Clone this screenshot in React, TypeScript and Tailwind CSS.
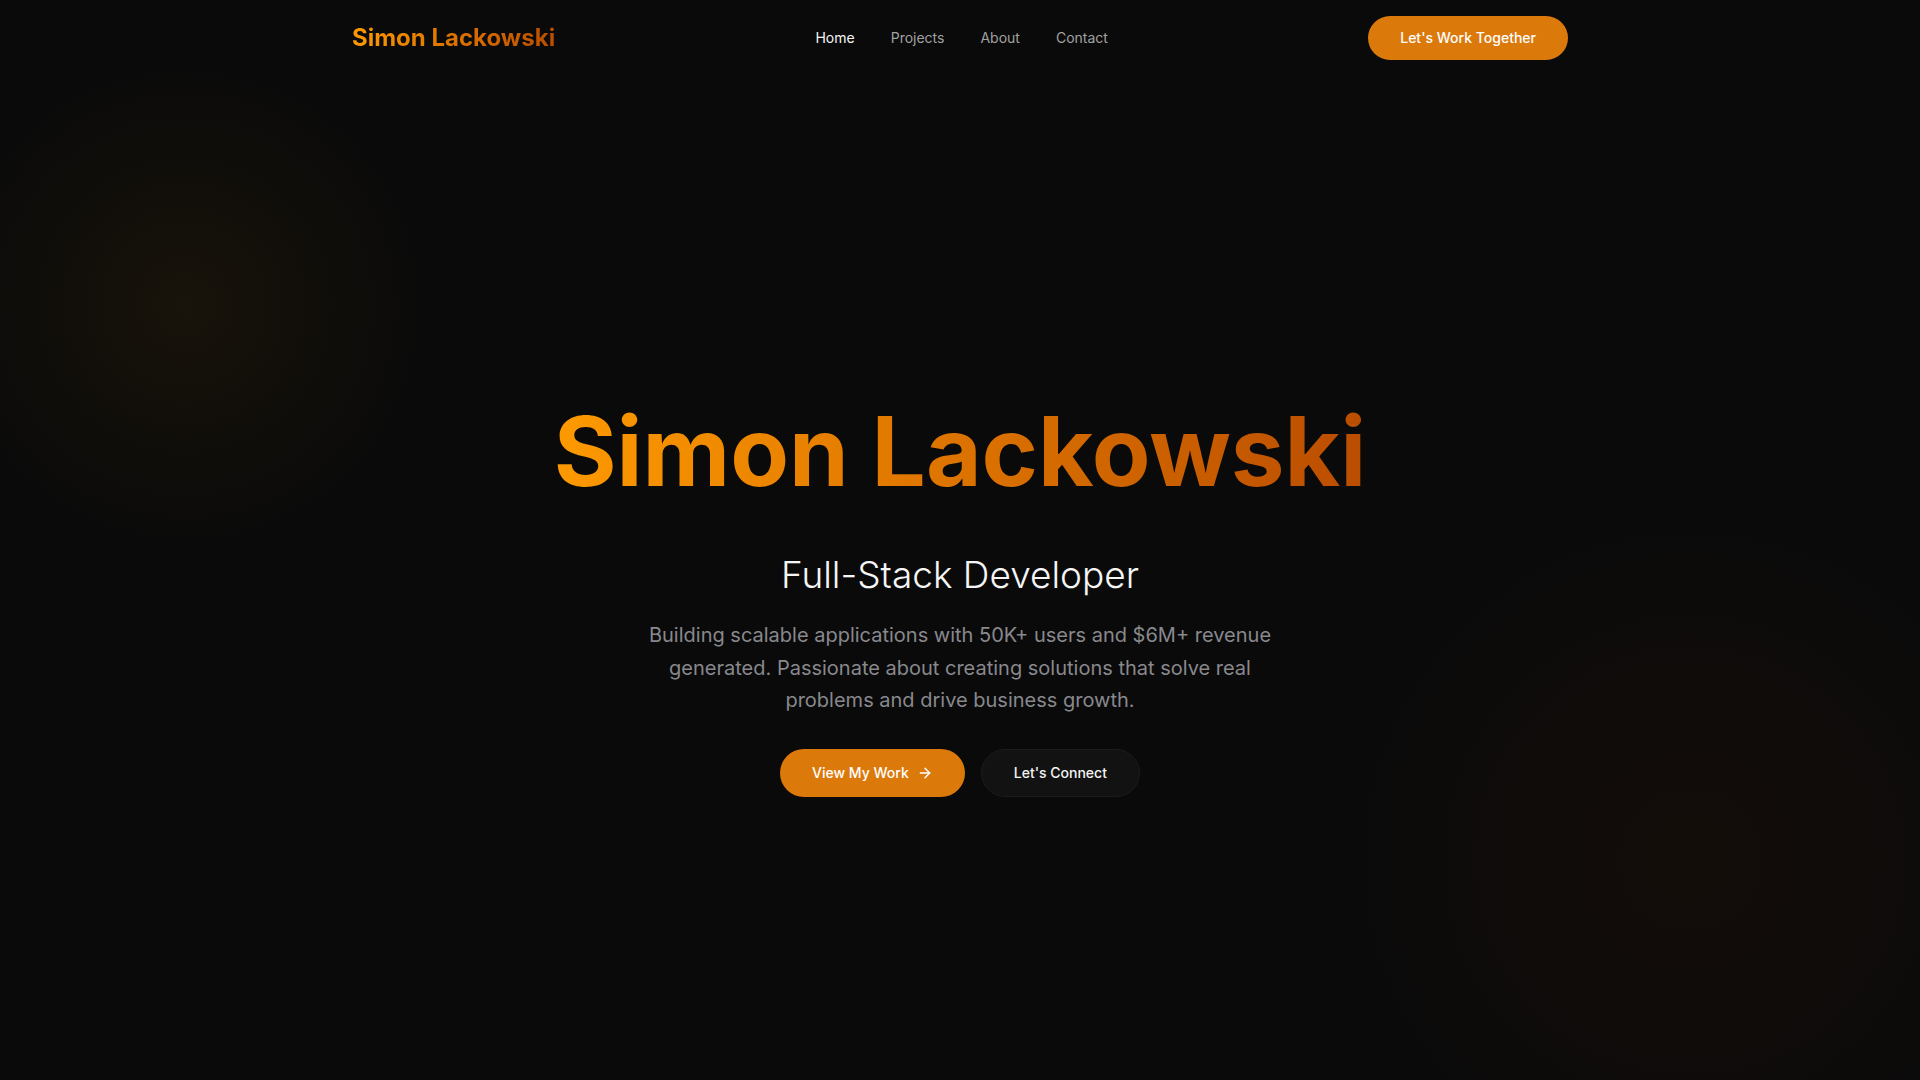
import React from "react";
import { ArrowRight } from "lucide-react";

export default function App() {
  return (
    <div
      className="relative min-h-screen overflow-hidden bg-[#0a0a0a] flex flex-col"
      style={{ fontFamily: "Inter, 'Noto Sans', sans-serif" }}
    >
      {/* background glows */}
      <div className="pointer-events-none absolute left-[-60px] top-[60px] h-[490px] w-[490px] rounded-full bg-[radial-gradient(circle,rgba(245,158,11,0.06)_0%,rgba(245,158,11,0.03)_35%,transparent_70%)]" />
      <div className="pointer-events-none absolute left-[1330px] top-[500px] h-[720px] w-[720px] rounded-full bg-[radial-gradient(circle,rgba(234,88,12,0.045)_0%,rgba(234,88,12,0.02)_40%,transparent_70%)]" />

      <header className="relative z-10 w-full">
        <div className="mx-auto flex max-w-7xl items-center justify-between px-8 pt-4 pb-4">
          <span className="bg-gradient-to-r from-amber-500 to-amber-700 bg-clip-text text-2xl font-bold text-transparent">
            Simon Lackowski
          </span>
          <nav className="flex items-center gap-9 text-sm">
            <a className="text-neutral-100">Home</a>
            <a className="text-neutral-400">Projects</a>
            <a className="text-neutral-400">About</a>
            <a className="text-neutral-400">Contact</a>
          </nav>
          <button className="h-11 rounded-full bg-[#dc790b] px-8 text-sm font-medium text-white">
            Let's Work Together
          </button>
        </div>
      </header>

      <main className="relative z-10 flex flex-1 flex-col items-center justify-center pt-11 text-center">
        <h1 className="mb-14 bg-gradient-to-r from-amber-500 to-amber-700 bg-clip-text text-8xl font-bold leading-none text-transparent">
          Simon Lackowski
        </h1>
        <h2 className="mb-6 text-[37px] leading-10 font-light text-neutral-100">
          Full-Stack Developer
        </h2>
        <p className="mb-8 max-w-2xl text-xl leading-relaxed text-[#88888d]">
          Building scalable applications with 50K+ users and $6M+ revenue
          generated. Passionate about creating solutions that solve real
          problems and drive business growth.
        </p>
        <div className="flex items-center gap-4">
          <button className="flex h-12 items-center gap-2 rounded-full bg-[#dc790b] px-8 text-sm font-medium text-white">
            View My Work
            <ArrowRight size={16} strokeWidth={2.25} />
          </button>
          <button className="flex h-12 items-center rounded-full border border-[#1c1c1c] bg-[#121212] px-8 text-sm font-medium text-neutral-100">
            Let's Connect
          </button>
        </div>
      </main>
    </div>
  );
}
